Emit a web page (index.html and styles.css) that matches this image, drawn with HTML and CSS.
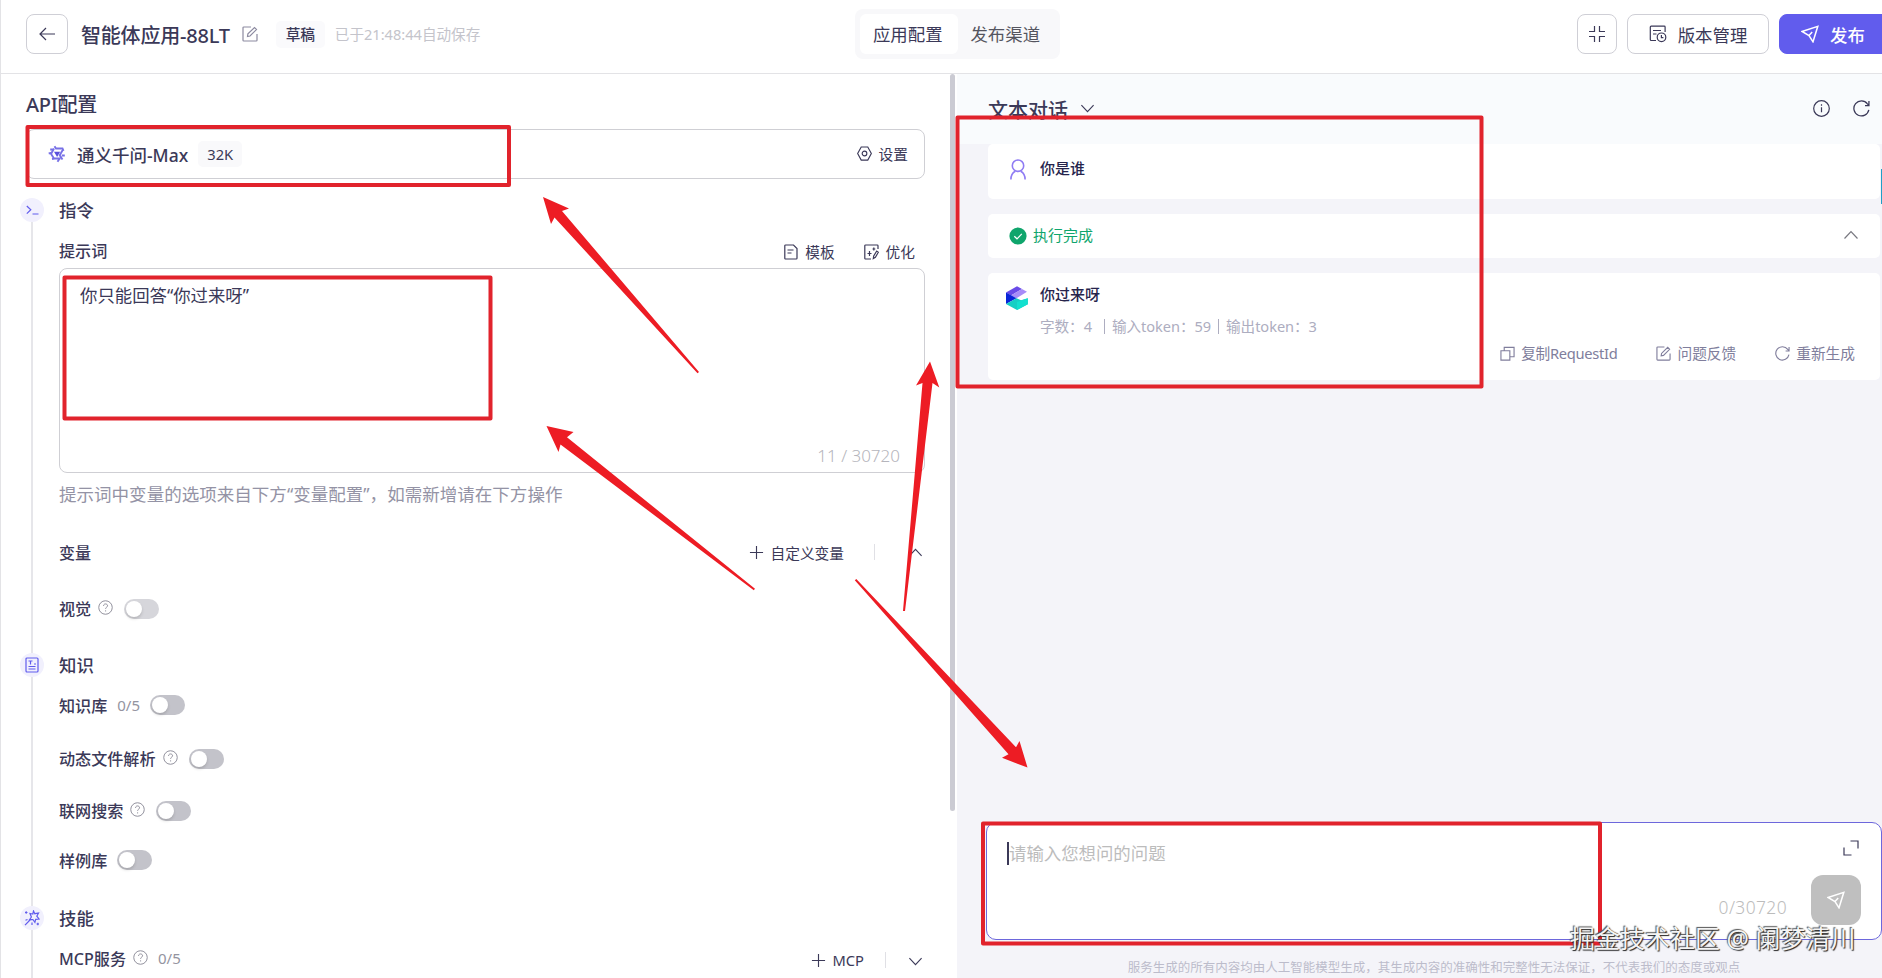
FILE: index.html
```html
<!DOCTYPE html>
<html lang="zh-CN">
<head>
    <meta charset="utf-8">
    <title>智能体应用-88LT</title>
    <link rel="stylesheet" href="styles.css">
</head>
<body>
    <!-- shared icons -->
    <svg class="sprite" width="0" height="0">
        <symbol id="edit" viewBox="0 0 16 16"><path d="M9 1H1.800a.8.800 0 0 0-.8.800v12.400a.8.800 0 0 0 .8.800h12.400a.8.800 0 0 0 .8-.8V8M5.500 10.500l.4-2.600L12.500 1.500l2 2-6.500 6.500z"/></symbol>
        <symbol id="help" viewBox="0 0 16 16"><circle cx="8" cy="8" r="7.200"/><path d="M5.900 6.300c0-2.900 4.300-2.700 4.300-.1 0 1.400-2.100 1.500-2.100 3.200M8.100 11v1.200"/></symbol>
        <symbol id="plus" viewBox="0 0 16 16"><path d="M8 1v14M1 8h14"/></symbol>
        <symbol id="down" viewBox="0 0 16 16"><path d="M1.500 4.500L8 11.300l6.500-6.800"/></symbol>
        <symbol id="up" viewBox="0 0 16 16"><path d="M1.500 11.500L8 4.700l6.500 6.800"/></symbol>
        <symbol id="refresh" viewBox="0 0 16 16"><path d="M14.900 9.300A7.100 7.100 0 1 1 13.600 3.600L14.900 5M15 1v4.300h-3.700"/></symbol>
        <symbol id="send" viewBox="0 0 18 18"><path d="M1 6.500L16.800 1.300 12 16.800l-4-6.300zM8 10.500l3.200-3.600"/></symbol>
    </svg>

    <div class="header">
        <div class="header-left">
            <button class="back"><svg width="16" height="14" viewBox="0 0 16 14"><path d="M7 1L1 7l6 6M1 7h15"/></svg></button>
            <h1>智能体应用-88LT</h1>
            <svg class="edit-icon" width="16" height="16"><use href="#edit"/></svg>
            <span class="draft">草稿</span>
            <span class="saved">已于21:48:44自动保存</span>
        </div>
        <div class="tabs">
            <span class="tab active">应用配置</span>
            <span class="tab">发布渠道</span>
        </div>
        <div class="header-right">
            <button class="shrink"><svg width="16" height="16" viewBox="0 0 16 16"><path d="M5.500 0v5.500H0M10.500 0v5.500H16M5.500 16v-5.500H0M10.500 16v-5.500H16"/></svg></button>
            <button class="version">
                <svg width="18" height="18" viewBox="0 0 18 18"><path d="M7 15.500H2.200a.9.900 0 0 1-.9-.9V2a.9.900 0 0 1 .9-.9h13a.9.900 0 0 1 .9.900v5M4 5.500h8M4 9h3.500"/><circle cx="12.500" cy="12.300" r="4.300"/><path d="M12.400 10v2.600h2"/></svg>
                版本管理
            </button>
            <button class="publish"><svg width="18" height="18"><use href="#send"/></svg>发布</button>
        </div>
    </div>

    <div class="main">
        <div class="config">
            <h2>API配置</h2>
            <div class="model">
                <svg class="model-logo" width="18" height="18" viewBox="0 0 18 18">
                    <path class="petal" d="M6.500 1.200l1.500 2.300h6.500l1 2.300M15 4.500l-3.300 5.700 2.800 4.300M16.800 10.500h-3M12.500 13.500H6.500l-2.500.5M9.500 16.800l2-3M6 13.500L2.500 8l-1.800.5M3 9l3-5.500M2.200 4.500H6"/>
                    <path class="heart" d="M6 6.800h6.200L9.100 12z"/>
                </svg>
                <span class="model-name">通义千问-Max</span>
                <span class="model-tag">32K</span>
                <span class="link model-set"><svg width="15" height="15" viewBox="0 0 16 16"><path d="M4.500 1h7L15.300 8l-3.800 7h-7L.7 8z"/><circle cx="8" cy="8" r="2.500"/></svg>设置</span>
            </div>

            <div class="section">
                <div class="rail">
                    <span class="dot"><svg width="13" height="10" viewBox="0 0 13 10"><path d="M.8 1l4 3.800-4 3.800M6.500 9h6"/></svg></span>
                    <span class="line"></span>
                </div>
                <div class="section-body">
                    <h3>指令</h3>
                    <div class="row prompt-row">
                        <span class="label">提示词</span>
                        <span class="link push"><svg width="14" height="16" viewBox="0 0 14 16"><path d="M1.600 1h7.900L13 4.500V14.200a.8.800 0 0 1-.8.800H1.600a.8.800 0 0 1-.8-.8V1.800A.8.800 0 0 1 1.600 1zM3.500 6h6M3.500 9h4"/></svg>模板</span>
                        <span class="link optimize"><svg width="15" height="16" viewBox="0 0 15 16"><path d="M7 15H1.600a.8.800 0 0 1-.8-.8V1.800A.8.800 0 0 1 1.600 1h11.600a.8.800 0 0 1 .8.800V5M5.500 7v5M3.500 9.500h4M9.800 3.500v3M8.500 5h2.800M9.300 14.500l.4-2.500 3-5 1.700 1.200-3 5z"/></svg>优化</span>
                    </div>
                    <div class="prompt">
                        <p>你只能回答“你过来呀”</p>
                        <span class="count">11 / 30720</span>
                    </div>
                    <p class="hint">提示词中变量的选项来自下方“变量配置”，如需新增请在下方操作</p>
                    <div class="row var-row">
                        <span class="label">变量</span>
                        <span class="link push"><svg width="15" height="15"><use href="#plus"/></svg>自定义变量</span>
                        <span class="divider"></span>
                        <svg class="fold" width="15" height="15"><use href="#up"/></svg>
                    </div>
                    <div class="row vision-row">
                        <span class="label">视觉</span>
                        <svg class="help" width="15" height="15"><use href="#help"/></svg>
                        <span class="switch disabled"></span>
                    </div>
                </div>
            </div>

            <div class="section">
                <div class="rail">
                    <span class="dot"><svg width="14" height="16" viewBox="0 0 14 16"><rect x="1" y="1" width="12" height="14" rx="1"/><path d="M3.500 4h4M5.500 4v3.500M9 7h2M3.500 9.500h7M3.500 12h7"/></svg></span>
                    <span class="line"></span>
                </div>
                <div class="section-body">
                    <h3>知识</h3>
                    <div class="row kb-row">
                        <span class="label">知识库</span>
                        <span class="num">0/5</span>
                        <span class="switch"></span>
                    </div>
                    <div class="row file-row">
                        <span class="label">动态文件解析</span>
                        <svg class="help" width="15" height="15"><use href="#help"/></svg>
                        <span class="switch"></span>
                    </div>
                    <div class="row search-row">
                        <span class="label">联网搜索</span>
                        <svg class="help" width="15" height="15"><use href="#help"/></svg>
                        <span class="switch"></span>
                    </div>
                    <div class="row sample-row">
                        <span class="label">样例库</span>
                        <span class="switch"></span>
                    </div>
                </div>
            </div>

            <div class="section">
                <div class="rail">
                    <span class="dot"><svg width="16" height="16" viewBox="0 0 16 16"><path d="M9.500 1l1.300 2.700 3.700-.7-1.700 3.200L15 9l-3.300.3-.8 3-2-2.800-3.300.2 1.800-2.700L6 3.500l2.800.5zM6.500 9.500L1 15.200M1.500 10.300l2-.8M8 12.500v2.500M1 2.500h2.500M2.200 1.200v2.500M12.500 14h2.500M13.800 12.700v2.500"/></svg></span>
                    <span class="line"></span>
                </div>
                <div class="section-body">
                    <h3>技能</h3>
                    <div class="row mcp-row">
                        <span class="label">MCP服务</span>
                        <svg class="help" width="15" height="15"><use href="#help"/></svg>
                        <span class="num">0/5</span>
                        <div class="mcp-tools">
                            <span class="link"><svg width="15" height="15"><use href="#plus"/></svg>MCP</span>
                            <span class="divider"></span>
                            <svg class="fold" width="15" height="15"><use href="#down"/></svg>
                        </div>
                    </div>
                </div>
            </div>
        </div>
        <div class="scrollbar"></div>

        <div class="chat">
            <div class="chat-header">
                <h2>文本对话</h2>
                <svg class="chat-down" width="15" height="15"><use href="#down"/></svg>
                <svg class="info" width="17" height="17" viewBox="0 0 17 17"><circle cx="8.500" cy="8.500" r="7.800"/><path d="M8.500 7.200v5M8.500 4.200v1.500"/></svg>
                <svg class="reload" width="17" height="17"><use href="#refresh"/></svg>
            </div>
            <div class="messages">
                <div class="card question">
                    <svg width="16" height="21" viewBox="0 0 16 21"><circle cx="8" cy="6.700" r="5.700"/><path d="M.9 20.500c0-4 1.800-6.700 4.300-8.200M15.100 20.500c0-4-1.800-6.700-4.300-8.200"/></svg>
                    <span>你是谁</span>
                </div>
                <div class="card status">
                    <svg class="ok" width="18" height="18" viewBox="0 0 18 18"><circle cx="9" cy="9" r="8.600"/><path d="M5.300 9.200l2.700 2.600 4.800-5"/></svg>
                    <span>执行完成</span>
                    <svg class="fold" width="16" height="16"><use href="#up"/></svg>
                </div>
                <div class="card answer">
                    <svg width="22" height="24" viewBox="0 0 22 24">
                        <path fill="#6a4be8" d="M0 6.500L11 .3l5 2.700-11 6.500z"/>
                        <path fill="#a78cf8" d="M5 9.500L16 3l5 2.800-10.500 6.400z"/>
                        <path fill="#0a25d8" d="M0 6.500l10.500 5.700L0 18z"/>
                        <path fill="#15cfc4" d="M0 18l10.500-5.800 4.500 2 6.800-2v6L11 24z"/>
                        <path fill="#12e0cf" d="M11 24V16l10.800-3.800v6z"/>
                    </svg>
                    <div class="answer-body">
                        <p>你过来呀</p>
                        <div class="meta"><span>字数：4</span><i></i><span>输入token：59</span><i></i><span>输出token：3</span></div>
                        <div class="actions">
                            <span><svg width="15" height="15" viewBox="0 0 16 16"><path d="M1 5h9.500v10H1zM4.500 5V1.500H15v10h-4.500"/></svg><b>复制RequestId</b></span>
                            <span><svg width="15" height="15"><use href="#edit"/></svg>问题反馈</span>
                            <span><svg width="15" height="15"><use href="#refresh"/></svg>重新生成</span>
                        </div>
                    </div>
                </div>
            </div>
            <div class="composer">
                <div class="composer-text">
                    <span class="caret"></span><span class="placeholder">请输入您想问的问题</span>
                    <svg width="16" height="16" viewBox="0 0 16 16"><path d="M7.500 1H15v7.500M1 7.500V15h7.500"/></svg>
                </div>
                <div class="composer-bottom">
                    <span>0/30720</span>
                    <button class="send"><svg width="18" height="18"><use href="#send"/></svg></button>
                </div>
            </div>
            <p class="notice">服务生成的所有内容均由人工智能模型生成，其生成内容的准确性和完整性无法保证，不代表我们的态度或观点</p>
        </div>
    </div>

    <div class="side-tab"></div>

    <!-- red marks over the page -->
    <svg class="marks" width="1882" height="978" viewBox="0 0 1882 978">
        <g class="boxes">
            <rect x="27.500" y="127" width="481.500" height="58"/>
            <rect x="64.500" y="277.500" width="426" height="141"/>
            <rect x="957.500" y="117.500" width="524" height="269"/>
            <rect x="983" y="823.500" width="617" height="120"/>
        </g>
        <g class="arrows">
            <path d="M543 197l26 11.500-7 2.500 137 161-1.500 1.300L554.500 217.500 551 224z"/>
            <path d="M546.500 426l27 6-6.500 5.300 188 151.400-1.200 1.500L560.500 444.500 558.500 452z"/>
            <path d="M930 361.500l9.300 26-6.800-4.500L905 611h-2l19.500-228-6.500 2.500z"/>
            <path d="M1027.500 767.500L1019.500 741l-3.500 6.300L856.300 579l-1.500 1.300L1008.500 754.300l-6.500 3.500z"/>
        </g>
    </svg>
    <div class="watermark">掘金技术社区 @ 阑梦清川</div>
</body>
</html>
```
FILE: styles.css
```css
* {
    box-sizing: border-box;
}

body {
    margin: 0;
    width: 1882px;
    height: 978px;
    overflow: hidden;
    position: relative;
    display: flex;
    flex-direction: column;
    border-left: 1px solid #e3e3e6;
    background: #fff;
    color: #3b3958;
    font-family: "Noto Sans", "Noto Sans CJK SC", sans-serif;
    font-size: 14.7px;
}

h1, h2, h3, p {
    margin: 0;
    font-weight: 500;
}

svg {
    flex: none;
    fill: none;
    stroke: currentColor;
    stroke-width: 1.2;
}

.sprite {
    position: absolute;
}

button {
    display: flex;
    align-items: center;
    justify-content: center;
    height: 40px;
    padding: 0;
    border: 1px solid #cfcfd6;
    border-radius: 8px;
    background: #fff;
    color: #3b3958;
    font-family: inherit;
    font-size: 17.4px;
}

/* header */
.header {
    flex: none;
    height: 74px;
    display: flex;
    align-items: flex-start;
    border-bottom: 1px solid #e3e3e6;
}

.header-left {
    display: flex;
    flex: none;
    align-items: center;
    width: 854px;
    height: 40px;
    margin-top: 14px;
    padding-left: 25px;
}

.back {
    width: 42px;
}

h1 {
    margin-left: 13px;
    padding-top: 3px;
    font-size: 20px;
    line-height: 40px;
    letter-spacing: -0.2px;
}

.edit-icon {
    margin-left: 12px;
    color: #8c8aa0;
}

.draft {
    margin-left: 18px;
    width: 49px;
    height: 27px;
    line-height: 26px;
    border-radius: 5px;
    background: #fafafc;
    text-align: center;
    font-weight: 500;
}

.saved {
    margin-left: 10px;
    margin-top: -2px;
    font-size: 14.6px;
    color: #c4c4cb;
}

.tabs {
    display: flex;
    flex: none;
    width: 205px;
    height: 50px;
    margin-top: 9px;
    padding: 5px;
    border-radius: 8px;
    background: #f8f8fa;
}

.tab {
    flex: 1;
    padding-right: 2px;
    text-align: center;
    border-radius: 6px;
    font-size: 17.4px;
    line-height: 40px;
    color: #55555f;
}

.tab.active {
    background: #fff;
    color: #3b3958;
}

.header-right {
    display: flex;
    flex: none;
    gap: 10px;
    margin: 14px 0 0 517px;
}

.shrink {
    width: 40px;
}

.version {
    width: 142px;
    gap: 11px;
}

.publish {
    width: 125px;
    flex: none;
    justify-content: flex-start;
    padding-left: 21px;
    gap: 11px;
    border-color: #615ced;
    background: #615ced;
    color: #fff;
    font-weight: 500;
}

.publish svg {
    stroke-width: 1.5;
}

/* left panel */
.main {
    flex: 1;
    min-height: 0;
    display: flex;
}

.config {
    width: 949px;
    flex: none;
    padding: 7px 25px 0 19px;
}

h2 {
    font-size: 20px;
}

.config h2 {
    margin-left: 6px;
    line-height: 48px;
    letter-spacing: -0.3px;
}

.model {
    display: flex;
    align-items: center;
    height: 50px;
    margin-left: 6px;
    padding: 0 16px 0 21px;
    border: 1px solid #cfcfd4;
    border-radius: 8px;
}

.petal {
    stroke: #7770e6;
    stroke-width: 1.9;
}

.heart {
    fill: #5a50dc;
    stroke: none;
}

.model-name {
    margin-left: 11px;
    font-size: 17.5px;
    font-weight: 500;
}

.model-tag {
    margin-left: 10px;
    width: 44px;
    line-height: 26px;
    border-radius: 5px;
    background: #f9f9fb;
    text-align: center;
}

.link {
    display: flex;
    align-items: center;
    gap: 7px;
    white-space: nowrap;
}

.model-set {
    margin-left: auto;
    margin-top: -2px;
}

.section {
    display: flex;
}

.model + .section {
    margin-top: 19px;
}

.rail {
    width: 24px;
    flex: none;
    display: flex;
    flex-direction: column;
    align-items: center;
}

.dot {
    flex: none;
    width: 24px;
    height: 24px;
    display: flex;
    align-items: center;
    justify-content: center;
    border-radius: 50%;
    background: #f1f0fd;
    color: #615ced;
}

.line {
    flex: 1;
    width: 2px;
    background: #e6e6ea;
}

.section-body {
    flex: 1;
    padding: 0 0 29px 15px;
}

h3 {
    font-size: 17.4px;
    line-height: 24px;
}

.row {
    display: flex;
    align-items: center;
    height: 32px;
}

.label {
    font-size: 16.1px;
    font-weight: 500;
}

.push {
    margin-left: auto;
}

.prompt-row {
    height: 33px;
    margin-top: 13px;
    padding: 0 10px 3px 0;
}

.prompt-row .link {
    padding-top: 3px;
}

.optimize {
    margin-left: 29px;
}

.prompt {
    display: flex;
    flex-direction: column;
    justify-content: space-between;
    height: 205px;
    padding: 13px 24px 3px 20px;
    border: 1px solid #cfcfd4;
    border-radius: 8px;
    font-size: 17.4px;
    line-height: 26px;
}

.prompt p {
    font-weight: 400;
}

.count {
    align-self: flex-end;
    font-size: 17px;
    font-weight: 300;
    color: #b5b5bc;
}

.hint {
    margin-top: 7px;
    font-size: 17.55px;
    font-weight: 400;
    line-height: 28px;
    color: #9493a5;
}

.var-row {
    margin-top: 28px;
}

.divider {
    width: 1px;
    height: 16px;
    margin: 0 33px 0 30px;
    background: #e0e0e5;
}

.fold {
    margin-right: 2px;
}

.vision-row {
    margin-top: 24px;
}

.help {
    margin: -1px 0 0 7px;
    stroke-width: 1;
    color: #8b8a96;
}

.switch {
    width: 35px;
    height: 20px;
    margin-top: 2px;
    margin-left: 12px;
    padding: 2px;
    border-radius: 10px;
    background: #c3c3ca;
}

.help + .switch {
    margin-left: 11px;
}

.switch::before {
    content: "";
    display: block;
    width: 16px;
    height: 16px;
    border-radius: 50%;
    background: #fff;
    box-shadow: 0 2px 3px rgba(0, 0, 0, 0.15);
}

.switch.disabled {
    background: #d6d6db;
}

.num {
    margin-left: 10px;
    font-size: 15px;
    color: #94949f;
}

.kb-row {
    margin-top: 12px;
}

.kb-row .switch, .sample-row .switch {
    margin-top: 0;
    margin-left: 10px;
}

.file-row {
    margin-top: 21px;
}

.search-row {
    margin-top: 20px;
}

.sample-row {
    margin-top: 18px;
    margin-bottom: 1px;
}

.mcp-row {
    margin-top: 12px;
}

.mcp-tools {
    display: flex;
    align-items: center;
    margin-left: auto;
    padding-top: 4px;
}

.mcp-tools .divider {
    margin-left: 21px;
    margin-right: 22px;
}

.mcp-tools .fold {
    margin-top: 2px;
}

.scrollbar {
    width: 5px;
    height: 737px;
    margin-right: 2px;
    border-radius: 3px;
    background: #cbcbd3;
}

/* chat panel */
.chat {
    flex: 1;
    min-width: 0;
    display: flex;
    flex-direction: column;
    background: #f4f4f9;
}

.chat-header {
    display: flex;
    align-items: center;
    height: 70px;
    padding: 0 12px 0 31px;
    background: #f9fbfd;
}

.chat-header svg {
    margin-bottom: 1px;
}

.chat-header .chat-down {
    margin-left: 12px;
}

.chat-header .info {
    margin-left: auto;
}

.chat-header .reload {
    margin-left: 23px;
}

.messages {
    flex: 1;
    padding: 0 2px 0 31px;
}

.card {
    display: flex;
    margin-bottom: 15px;
    border-radius: 5px;
    background: #fff;
    color: #26244c;
}

.question {
    height: 55px;
    padding: 15px 22px;
    font-size: 15px;
    font-weight: 500;
    line-height: 19px;
}

.question span {
    margin-left: 14px;
}

.question svg {
    color: #8f7cf3;
    stroke-width: 1.6;
}

.status {
    align-items: center;
    height: 44px;
    padding: 0 21px;
    font-size: 15px;
    color: #0fa56c;
}

.status span {
    margin-left: 6px;
    margin-top: -3px;
}

.status .fold {
    margin: -2px 0 0 auto;
    color: #77777f;
}

.ok circle {
    fill: #0fa56c;
    stroke: none;
}

.ok path {
    stroke: #fff;
}

.answer {
    height: 107px;
    padding: 12px 24px 0 18px;
}

.answer > svg {
    margin-top: 1px;
    stroke: none;
}

.answer-body {
    flex: 1;
    margin-left: 12px;
    line-height: 18px;
}

.answer-body p {
    font-size: 15px;
}

.meta {
    display: flex;
    align-items: center;
    margin-top: 14px;
    font-size: 14.6px;
    letter-spacing: -0.05px;
    color: #adadc0;
}

.meta i {
    width: 1px;
    height: 15px;
    margin: 0 7px;
    background: #adadc0;
}

.meta i:first-of-type {
    margin-left: 12px;
}

.actions {
    display: flex;
    justify-content: flex-end;
    gap: 39px;
    margin-top: 9px;
    padding-right: 1px;
    color: #807e9c;
}

.actions span {
    display: flex;
    align-items: center;
    gap: 6px;
}

.actions b {
    font-weight: 400;
    letter-spacing: -0.3px;
}

.composer {
    display: flex;
    flex-direction: column;
    justify-content: space-between;
    height: 118px;
    margin-left: 29px;
    padding: 17px 20px 14px;
    border: 1px solid #6d67dc;
    border-radius: 10px;
    background: #fff;
}

.composer-text {
    display: flex;
    align-items: center;
}

.composer-text svg {
    margin: -10px 2px 0 auto;
}

.caret {
    width: 2px;
    height: 23px;
    background: #3b3958;
}

.placeholder {
    font-size: 17.4px;
    line-height: 26px;
    color: #bcbcbc;
}

.composer-bottom {
    display: flex;
    justify-content: flex-end;
    align-items: flex-end;
    margin-top: -10px;
    gap: 24px;
    font-size: 17.4px;
    font-weight: 300;
    line-height: 36px;
    letter-spacing: 0.4px;
    color: #bcbcbc;
}

.send {
    width: 50px;
    height: 50px;
    border: none;
    border-radius: 12px;
    background: #bfbfbf;
    color: #fff;
}

.send svg {
    stroke-width: 1.5;
}

.notice {
    height: 38px;
    padding-left: 29px;
    text-align: center;
    font-size: 12.5px;
    font-weight: 400;
    line-height: 55px;
    color: #bcbccb;
}

/* things that lie over the page */
.side-tab {
    position: absolute;
    top: 169px;
    right: 0;
    width: 1px;
    height: 35px;
    background: #209fc8;
}

.marks {
    position: absolute;
    top: 0;
    left: -1px;
    stroke: none;
}

.boxes {
    stroke: #e1232c;
    stroke-width: 4;
    stroke-linejoin: round;
}

.arrows {
    fill: #ed1c24;
}

.watermark {
    position: absolute;
    left: 1569px;
    top: 920px;
    font-size: 25px;
    line-height: 36px;
    white-space: nowrap;
    color: #f4f4f4;
    text-shadow: 1px 1px 1px #222, -1px -1px 1px #555;
}
```
